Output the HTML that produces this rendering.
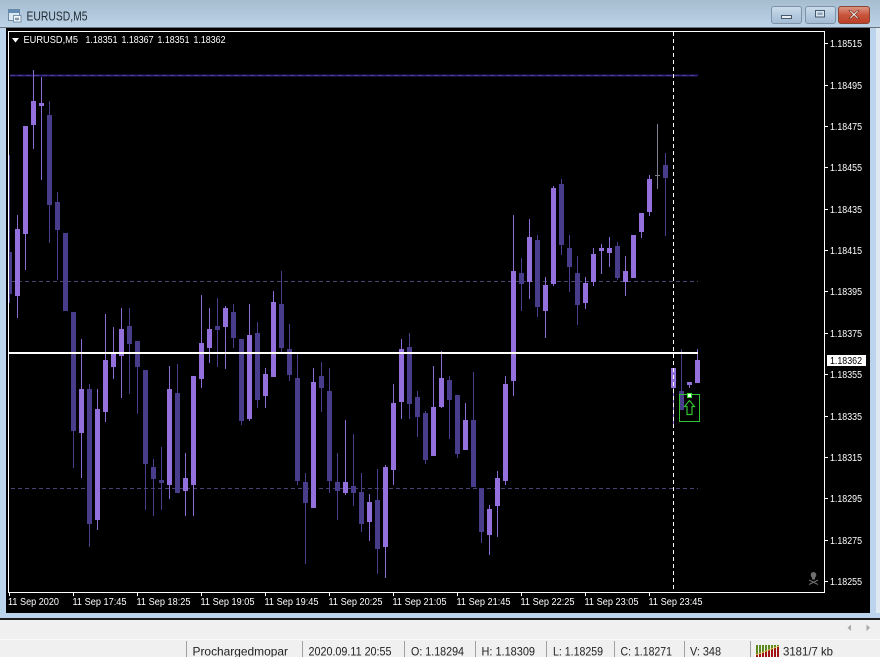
<!DOCTYPE html>
<html>
<head>
<meta charset="utf-8">
<style>
html,body{margin:0;padding:0;background:#f0f0f0}
svg{display:block;font-family:"Liberation Sans",sans-serif}
</style>
</head>
<body>
<svg xmlns="http://www.w3.org/2000/svg" width="880" height="657" viewBox="0 0 880 657">
<defs>
<linearGradient id="tb" x1="0" y1="0" x2="0" y2="1"><stop offset="0" stop-color="#a6bccf"/><stop offset="1" stop-color="#bdd3e8"/></linearGradient>
<linearGradient id="btn" x1="0" y1="0" x2="0" y2="1"><stop offset="0" stop-color="#cbdcec"/><stop offset=".5" stop-color="#b4cade"/><stop offset="1" stop-color="#a3bcd4"/></linearGradient>
<linearGradient id="cl" x1="0" y1="0" x2="0" y2="1"><stop offset="0" stop-color="#dc9a88"/><stop offset=".5" stop-color="#c9543c"/><stop offset="1" stop-color="#bb3f26"/></linearGradient>
<clipPath id="chart"><rect x="9" y="32" width="815" height="560"/></clipPath>
</defs>

<!-- window frame -->
<rect x="0" y="0" width="880" height="28" fill="url(#tb)"/>
<rect x="0" y="28" width="6" height="592" fill="#bbd4ec"/>
<rect x="870" y="28" width="6" height="592" fill="#bbd4ec"/>
<rect x="876" y="28" width="4" height="592" fill="#dfe9f2"/>
<rect x="0" y="613" width="880" height="5" fill="#bbd4ec"/>
<rect x="0" y="618" width="880" height="2" fill="#1c1c1c"/>
<rect x="0" y="620" width="880" height="19" fill="#f0f0f0"/>
<rect x="0" y="639" width="880" height="1" fill="#fbfbfb"/>
<rect x="0" y="640" width="880" height="17" fill="#f0f0f0"/>

<!-- title icon -->
<rect x="8.5" y="9.5" width="11" height="11" fill="#dce8f2" stroke="#6c8aa6"/>
<rect x="9" y="10" width="10" height="3" fill="#5f8db5"/>
<rect x="13.5" y="15.5" width="7.5" height="6.5" fill="#f4f8fb" stroke="#7894ad"/>
<path d="M15 20l1-2 1 2 1-2 1 2" fill="none" stroke="#4a6c8c" stroke-width=".8"/>
<text x="26.5" y="20.5" font-size="12.5" fill="#1f2a33" textLength="61" lengthAdjust="spacingAndGlyphs">EURUSD,M5</text>

<!-- window buttons -->
<rect x="771.5" y="6.5" width="30" height="17" rx="2.5" fill="url(#btn)" stroke="#7d92a7"/>
<rect x="781.5" y="15.5" width="10" height="3" fill="#e8eef4" stroke="#46586a"/>
<rect x="805.5" y="6.5" width="30" height="17" rx="2.5" fill="url(#btn)" stroke="#7d92a7"/>
<rect x="815.5" y="10.5" width="9" height="6.5" fill="#d9e5ef" stroke="#46586a"/>
<rect x="817.5" y="12.5" width="5" height="2.5" fill="#8ea4b8"/>
<rect x="838.5" y="6.5" width="31" height="17" rx="2.5" fill="url(#cl)" stroke="#8a4434"/>
<path d="M849 10.500l2 0 3 3 3-3 2 0-3.800 4 3.800 4-2 0-3-3-3 3-2 0 3.800-4z" fill="#fff" stroke="#6a3024" stroke-width=".6"/>

<!-- chart bg -->
<rect x="6" y="28" width="864" height="585" fill="#000"/>
<rect x="0" y="27" width="880" height="1" fill="#69747e"/>

<g clip-path="url(#chart)" shape-rendering="crispEdges">
<!-- levels -->
<path d="M10 75.500H698" stroke="#2a1f78" stroke-width="2"/>
<path d="M10 75.500H698" stroke="#483d8b" stroke-width="1" stroke-dasharray="5 3"/>
<path d="M11 281.500H698M11 488.500H698" stroke="#4b4173" stroke-width="1" stroke-dasharray="4 3"/>

<!-- dark wicks -->
<path fill="none" stroke="#483d8b" stroke-width="1" d="M9.500 155V303M49.500 101V243M57.500 192V280M73.500 312V468M89.500 384V547M129.500 308V394M137.500 341V414M145.500 370V510M153.500 459V516M161.500 447V510M177.500 364V493M217.500 298V367M233.500 304V348M241.500 339V425M257.500 322V408M281.500 271V352M289.500 324V381M297.500 354V485M305.500 473V564M321.500 362V412M329.500 368V493M337.500 453V520M353.500 434V506M361.500 473V532M377.500 469V574M409.500 333V419M417.500 391V437M425.500 411V464M449.500 376V439M457.500 395V458M473.500 372V487M481.500 488V543M521.500 258V311M537.500 235V317M561.500 179V255M569.500 235V292M577.500 256V325M617.500 242V280M665.500 153V236M681.500 349V410"/>
<!-- dark bodies -->
<path fill="none" stroke="#483d8b" stroke-width="5" d="M9.500 252V294M49.500 115V205M57.500 202V230M65.500 233V311M73.500 312V431M89.500 389V524M129.500 326V344M137.500 341V367M145.500 370V464M153.500 467V479M161.500 480V483M177.500 393V493M217.500 326V330M233.500 312V338M241.500 339V421M257.500 333V400M281.500 304V348M289.500 349V375M297.500 378V481M305.500 482V503M321.500 376V388M329.500 391V481M337.500 482V491M353.500 486V493M361.500 492V524M377.500 500V549M409.500 347V404M417.500 397V417M425.500 413V460M449.500 380V400M457.500 395V454M473.500 420V487M481.500 488V532M521.500 273V284M537.500 240V307M561.500 184V245M569.500 248V267M577.500 273V305M617.500 246V278M665.500 165V178M681.500 391V410"/>
<!-- light wicks -->
<path fill="none" stroke="#8a69d0" stroke-width="1" d="M17.500 215V318M25.500 234V270M33.500 70V149M41.500 77V180M81.500 339V478M97.500 389V530M105.500 314V422M113.500 327V379M121.500 308V398M169.500 366V499M185.500 453V516M193.500 485V516M201.500 295V388M209.500 308V363M225.500 306V369M249.500 304V421M265.500 368V408M273.500 291V377M313.500 368V508M345.500 420V495M369.500 494V541M385.500 465V578M393.500 384V485M401.500 339V419M433.500 366V456M441.500 351V408M465.500 403V450M489.500 505V555M497.500 471V537M505.500 376V485M513.500 215V396M529.500 219V299M545.500 277V338M553.500 186V286M585.500 277V309M593.500 248V286M601.500 244V274M609.500 237V267M625.500 256V296M641.500 213V238M649.500 175V216M673.500 368V427M689.500 382V388M697.500 349V383"/>
<!-- light bodies -->
<path fill="none" stroke="#9370db" stroke-width="5" d="M17.500 229V296M25.500 126V234M33.500 101V125M41.500 103V106M81.500 389V433M97.500 409V520M105.500 360V412M113.500 354V367M121.500 329V356M169.500 389V485M185.500 478V491M193.500 376V485M201.500 343V379M209.500 329V348M225.500 308V327M249.500 335V419M265.500 374V396M273.500 302V377M313.500 382V508M345.500 482V493M369.500 502V522M385.500 467V547M393.500 403V470M401.500 349V402M433.500 407V456M441.500 378V407M465.500 420V450M489.500 509V535M497.500 478V506M505.500 384V481M513.500 271V381M529.500 237V282M545.500 285V311M553.500 188V284M585.500 283V303M593.500 254V282M601.500 248V251M609.500 248V253M625.500 271V282M633.500 235V278M641.500 213V232M649.500 179V212M673.500 368V388M689.500 382V385M697.500 360V383"/>
<!-- doji -->
<path fill="none" stroke="#7d7d92" stroke-width="1" d="M657.500 124V189M655 175.500H660"/>

<!-- horizontal price line -->
<rect x="9" y="352" width="689" height="2" fill="#fff"/>
<!-- crosshair -->
<path d="M673.500 32V592" stroke="#fff" stroke-width="1" stroke-dasharray="4 3" fill="none"/>

<!-- green signal -->
<rect x="679.500" y="394.500" width="20" height="27" fill="none" stroke="#2fc12f"/>
</g>
<path d="M689.500 400.500l5 6h-2.500v8h-5v-8h-2.500z" fill="#000" stroke="#2fc12f" stroke-width="1.200"/>
<rect x="687.500" y="393.500" width="4" height="4" fill="#eaffea" stroke="#2fe02f"/>

<!-- skull -->
<g fill="#6f6f6f" stroke="none">
<ellipse cx="813.500" cy="575" rx="2.800" ry="3"/>
<rect x="812" y="577.500" width="3" height="2"/>
</g>
<path d="M809 580l9 4.500M818 580l-9 4.500" stroke="#6f6f6f" stroke-width="1.100" fill="none"/>

<!-- chart border -->
<path d="M8.500 31.500H824.500V592.500H8.500Z" fill="none" stroke="#fff" shape-rendering="crispEdges"/>

<!-- header -->
<path d="M12 38h7l-3.500 4.500z" fill="#fff"/>
<g fill="#fff" font-size="10">
<text x="23.500" y="43" textLength="54.500" lengthAdjust="spacingAndGlyphs">EURUSD,M5</text>
<text x="85.500" y="43" textLength="32" lengthAdjust="spacingAndGlyphs">1.18351</text>
<text x="121.500" y="43" textLength="32" lengthAdjust="spacingAndGlyphs">1.18367</text>
<text x="157.500" y="43" textLength="32" lengthAdjust="spacingAndGlyphs">1.18351</text>
<text x="193.500" y="43" textLength="32" lengthAdjust="spacingAndGlyphs">1.18362</text>
</g>

<!-- price axis ticks -->
<path d="M825 43.500h3M825 85.500h3M825 126.500h3M825 167.500h3M825 209.500h3M825 250.500h3M825 291.500h3M825 333.500h3M825 374.500h3M825 416.500h3M825 457.500h3M825 498.500h3M825 540.500h3M825 581.500h3" stroke="#fff" fill="none" shape-rendering="crispEdges"/>
<g fill="#fff" font-size="10">
<text x="830" y="47" textLength="32" lengthAdjust="spacingAndGlyphs">1.18515</text>
<text x="830" y="89" textLength="32" lengthAdjust="spacingAndGlyphs">1.18495</text>
<text x="830" y="130" textLength="32" lengthAdjust="spacingAndGlyphs">1.18475</text>
<text x="830" y="171" textLength="32" lengthAdjust="spacingAndGlyphs">1.18455</text>
<text x="830" y="213" textLength="32" lengthAdjust="spacingAndGlyphs">1.18435</text>
<text x="830" y="254" textLength="32" lengthAdjust="spacingAndGlyphs">1.18415</text>
<text x="830" y="295" textLength="32" lengthAdjust="spacingAndGlyphs">1.18395</text>
<text x="830" y="337" textLength="32" lengthAdjust="spacingAndGlyphs">1.18375</text>
<text x="830" y="378" textLength="32" lengthAdjust="spacingAndGlyphs">1.18355</text>
<text x="830" y="420" textLength="32" lengthAdjust="spacingAndGlyphs">1.18335</text>
<text x="830" y="461" textLength="32" lengthAdjust="spacingAndGlyphs">1.18315</text>
<text x="830" y="502" textLength="32" lengthAdjust="spacingAndGlyphs">1.18295</text>
<text x="830" y="544" textLength="32" lengthAdjust="spacingAndGlyphs">1.18275</text>
<text x="830" y="585" textLength="32" lengthAdjust="spacingAndGlyphs">1.18255</text>
</g>
<rect x="827" y="355" width="39" height="11" fill="#fff"/>
<text x="830" y="364" font-size="10" fill="#000" textLength="32" lengthAdjust="spacingAndGlyphs">1.18362</text>

<!-- time axis -->
<path d="M9.500 593v3M73.500 593v3M137.500 593v3M201.500 593v3M265.500 593v3M329.500 593v3M393.500 593v3M457.500 593v3M521.500 593v3M585.500 593v3M649.500 593v3" stroke="#fff" fill="none" shape-rendering="crispEdges"/>
<g fill="#fff" font-size="10">
<text x="8" y="605" textLength="51" lengthAdjust="spacingAndGlyphs">11 Sep 2020</text>
<text x="72.500" y="605" textLength="54" lengthAdjust="spacingAndGlyphs">11 Sep 17:45</text>
<text x="136.500" y="605" textLength="54" lengthAdjust="spacingAndGlyphs">11 Sep 18:25</text>
<text x="200.500" y="605" textLength="54" lengthAdjust="spacingAndGlyphs">11 Sep 19:05</text>
<text x="264.500" y="605" textLength="54" lengthAdjust="spacingAndGlyphs">11 Sep 19:45</text>
<text x="328.500" y="605" textLength="54" lengthAdjust="spacingAndGlyphs">11 Sep 20:25</text>
<text x="392.500" y="605" textLength="54" lengthAdjust="spacingAndGlyphs">11 Sep 21:05</text>
<text x="456.500" y="605" textLength="54" lengthAdjust="spacingAndGlyphs">11 Sep 21:45</text>
<text x="520.500" y="605" textLength="54" lengthAdjust="spacingAndGlyphs">11 Sep 22:25</text>
<text x="584.500" y="605" textLength="54" lengthAdjust="spacingAndGlyphs">11 Sep 23:05</text>
<text x="648.500" y="605" textLength="54" lengthAdjust="spacingAndGlyphs">11 Sep 23:45</text>
</g>

<!-- scroll arrows -->
<path d="M851 624.500v6.500l-3.500-3.250z" fill="#a8a8a8"/>
<path d="M866.500 624.500v6.500l3.500-3.250z" fill="#a8a8a8"/>

<!-- status bar -->
<path d="M186.500 641V657M302.500 641V657M404.500 641V657M475.500 641V657M546.500 641V657M614.500 641V657M684.500 641V657M750.500 641V657" stroke="#a0a0a0" fill="none" shape-rendering="crispEdges"/>
<g fill="#222" font-size="12">
<text x="192.500" y="655.500" textLength="95.500" lengthAdjust="spacingAndGlyphs">Prochargedmopar</text>
<text x="308.500" y="655.500" textLength="83" lengthAdjust="spacingAndGlyphs">2020.09.11 20:55</text>
<text x="411" y="655.500" textLength="53" lengthAdjust="spacingAndGlyphs">O: 1.18294</text>
<text x="481.500" y="655.500" textLength="53.500" lengthAdjust="spacingAndGlyphs">H: 1.18309</text>
<text x="553" y="655.500" textLength="50" lengthAdjust="spacingAndGlyphs">L: 1.18259</text>
<text x="620.500" y="655.500" textLength="51.500" lengthAdjust="spacingAndGlyphs">C: 1.18271</text>
<text x="690" y="655.500" textLength="31" lengthAdjust="spacingAndGlyphs">V: 348</text>
<text x="783" y="655.500" textLength="50" lengthAdjust="spacingAndGlyphs">3181/7 kb</text>
</g>
<!-- status connection icon -->
<g shape-rendering="crispEdges">
<path d="M757 645v12M760 645v12M763 645v12M766 645v12M769 645v12M772 645v12M775 645v12M778 645v12" stroke="#5d8a1e" stroke-width="2" fill="none"/>
<path d="M757 654v3M760 653v4M763 652v5M766 651v6M769 650v7M772 649v8M775 648v9M778 647v10" stroke="#a01414" stroke-width="2" fill="none"/>
</g>
<path d="M756 655L779 646" stroke="#e8d060" stroke-width=".8" fill="none"/>
</svg>
</body>
</html>
